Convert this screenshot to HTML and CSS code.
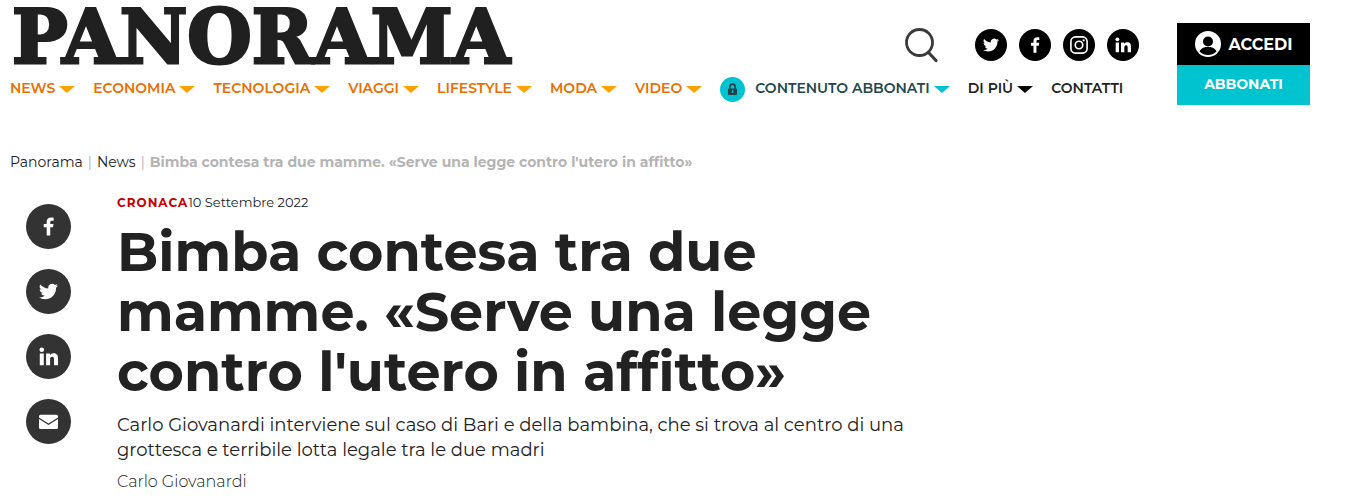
FILE: index.html
```html
<!DOCTYPE html>
<html lang="it">
<head>
    <meta charset="UTF-8">
    <meta name="viewport" content="width=device-width, initial-scale=1.0">
    <title>Bimba contesa tra due mamme - Panorama</title>
    <link rel="stylesheet" href="styles.css">
</head>
<body>
    <!-- Icons shared by header and share bar -->
    <svg class="sprite" aria-hidden="true">
        <symbol id="facebook" viewBox="0 0 24 24">
            <path d="M14.200 23.500V13h3.500l.6-4.200h-4.100V6.600c0-1.300.5-2 2.100-2h2.200V.8C17.900.6 16.800.5 15.500.5c-3.600 0-5.800 1.900-5.800 5.600v2.700H6V13h3.700v10.500z"/>
        </symbol>
        <symbol id="twitter" viewBox="0 0 24 24">
            <path d="M23.950 4.570a10 10 0 0 1-2.820.770 4.960 4.960 0 0 0 2.160-2.720c-.950.560-2 .970-3.130 1.190a4.920 4.920 0 0 0-8.380 4.480C7.690 8.100 4.070 6.130 1.640 3.160a4.920 4.920 0 0 0 1.520 6.570 4.900 4.900 0 0 1-2.230-.610v.060a4.920 4.920 0 0 0 3.950 4.830 5 5 0 0 1-2.210.080 4.940 4.940 0 0 0 4.600 3.420A9.870 9.870 0 0 1 0 19.540a13.990 13.990 0 0 0 7.550 2.210c9.050 0 14-7.500 14-13.980 0-.210 0-.420-.020-.630a9.940 9.940 0 0 0 2.460-2.550z"/>
        </symbol>
        <symbol id="linkedin" viewBox="0 0 24 24">
            <circle cx="3.500" cy="3.500" r="2.900"/>
            <path d="M1 8.300h5V23H1zM9 8.300h4.800v2c.8-1.400 2.300-2.400 4.600-2.400 4.600 0 5.600 2.900 5.600 7V23h-5v-7c0-1.800-.2-3.700-2.400-3.700S14 14 14 16v7H9z"/>
        </symbol>
        <symbol id="instagram" viewBox="0 0 24 24">
            <rect x="1.200" y="1.200" width="21.600" height="21.600" rx="6" fill="none" stroke="currentColor" stroke-width="2.200"/>
            <circle cx="12" cy="12" r="5" fill="none" stroke="currentColor" stroke-width="2.200"/>
            <circle cx="18.200" cy="5.800" r="1.500"/>
        </symbol>
        <symbol id="mail" viewBox="0 0 24 24">
            <path d="M2 3.500h20a2 2 0 0 1 2 2v1.300L12 14.500 0 6.800V5.500a2 2 0 0 1 2-2z"/>
            <path d="M0 8.800l12 7.700 12-7.700v10.700a2 2 0 0 1-2 2H2a2 2 0 0 1-2-2z"/>
        </symbol>
    </svg>

    <header class="header">
        <div class="header-main">
            <div class="topbar">
                <a class="logo" href="#">PANORAMA</a>
                <div class="tools">
                    <button class="search" type="button" aria-label="Cerca">
                        <svg viewBox="0 0 34 36" width="34" height="36" fill="none" stroke="#3a3a3a" stroke-width="2.800">
                            <circle cx="14.500" cy="15.500" r="13"/>
                            <path d="M23.500 25.500l7.500 8" stroke-width="3.200" stroke-linecap="round"/>
                        </svg>
                    </button>
                    <div class="social">
                        <a href="#" aria-label="Twitter"><svg><use href="#twitter"/></svg></a>
                        <a href="#" aria-label="Facebook"><svg><use href="#facebook"/></svg></a>
                        <a href="#" aria-label="Instagram"><svg class="wide"><use href="#instagram"/></svg></a>
                        <a href="#" aria-label="LinkedIn"><svg><use href="#linkedin"/></svg></a>
                    </div>
                </div>
            </div>
            <nav class="menu">
                <a class="has-sub" href="#">NEWS</a>
                <a class="has-sub" href="#">ECONOMIA</a>
                <a class="has-sub" href="#">TECNOLOGIA</a>
                <a class="has-sub" href="#">VIAGGI</a>
                <a class="has-sub" href="#">LIFESTYLE</a>
                <a class="has-sub" href="#">MODA</a>
                <a class="has-sub" href="#">VIDEO</a>
                <a class="has-sub premium" href="#">
                    <svg class="lock" viewBox="0 0 25 25">
                        <circle cx="12.500" cy="12.500" r="12.500" fill="#00c3d0"/>
                        <path d="M9.800 12V9.800a2.700 2.700 0 0 1 5.400 0V12" fill="none" stroke="#263f4b" stroke-width="1.600"/>
                        <rect x="8" y="11.500" width="9" height="6.500" rx="1" fill="#263f4b"/>
                        <path d="M12.500 13v3" stroke="#00c3d0" stroke-width="1.200"/>
                    </svg>
                    CONTENUTO ABBONATI
                </a>
                <a class="has-sub dark" href="#">DI PIÙ</a>
                <a class="dark" href="#">CONTATTI</a>
            </nav>
        </div>
        <div class="account">
            <a class="login" href="#">
                <svg viewBox="0 0 26 26" width="26" height="26">
                    <circle cx="13" cy="13" r="13" fill="#fff"/>
                    <circle cx="13" cy="10.500" r="5" fill="#000"/>
                    <path d="M4.500 20.500c1.500-3 4-4 6-4.500h5c2 .5 4.500 1.500 6 4.500a12 12 0 0 1-17 0z" fill="#000"/>
                </svg>
                ACCEDI
            </a>
            <a class="subscribe" href="#">ABBONATI</a>
        </div>
    </header>

    <nav class="breadcrumb">
        <a href="#">Panorama</a><span>|</span><a href="#">News</a><span>|</span><strong>Bimba contesa tra due mamme. «Serve una legge contro l'utero in affitto»</strong>
    </nav>

    <main class="article">
        <div class="share">
            <a href="#" aria-label="Condividi su Facebook"><svg><use href="#facebook"/></svg></a>
            <a href="#" aria-label="Condividi su Twitter"><svg><use href="#twitter"/></svg></a>
            <a href="#" aria-label="Condividi su LinkedIn"><svg><use href="#linkedin"/></svg></a>
            <a href="#" aria-label="Invia per email"><svg><use href="#mail"/></svg></a>
        </div>
        <article class="post">
            <div class="meta"><a href="#">CRONACA</a><time datetime="2022-09-10">10 Settembre 2022</time></div>
            <h1>Bimba contesa tra due mamme. «Serve una legge contro l'utero in affitto»</h1>
            <p class="summary">Carlo Giovanardi interviene sul caso di Bari e della bambina, che si trova al centro di una grottesca e terribile lotta legale tra le due madri</p>
            <a class="author" href="#">Carlo Giovanardi</a>
        </article>
    </main>
</body>
</html>
```
FILE: styles.css
```css
* {
    box-sizing: border-box;
}
body {
    margin: 0;
    background: #fff;
    color: #222;
    font-family: Montserrat, Inter, sans-serif;
}
a {
    color: inherit;
    text-decoration: none;
}
.sprite {
    display: none;
}

/* Header */
.header {
    display: flex;
    gap: 38px;
    padding: 0 38px 0 10px;
}
.header-main {
    flex: 1;
    min-width: 0;
}
.topbar {
    display: flex;
    justify-content: space-between;
    height: 77px;
}
.logo {
    padding-left: 2px;
    color: #202020;
    font-family: "DejaVu Serif", serif;
    font-size: 74px;
    font-weight: bold;
    line-height: 74px;
    -webkit-text-stroke: 3px #202020;
}
.tools {
    display: flex;
    align-items: center;
    gap: 36px;
    padding-top: 13px;
}
.search {
    display: flex;
    padding: 0;
    border: 0;
    background: none;
    cursor: pointer;
}
.social {
    display: flex;
    gap: 12px;
}
.social a {
    display: flex;
    align-items: center;
    justify-content: center;
    width: 32px;
    height: 32px;
    border-radius: 50%;
    background: #000;
    color: #fff;
}
.social svg {
    width: 16px;
    height: 16px;
    fill: currentColor;
}
.social .wide {
    width: 18px;
    height: 18px;
}
.menu {
    display: flex;
    align-items: center;
    gap: 18px;
    height: 22px;
    color: #eb6e00;
    font-size: 14px;
    font-weight: 600;
    line-height: 22px;
    white-space: nowrap;
}
.menu a {
    display: flex;
    align-items: center;
}
.has-sub::after {
    content: "";
    margin: 3px 0 0 4px;
    border: solid transparent;
    border-width: 7px 8px 0;
    border-top-color: #ffa100;
}
.menu .premium {
    color: #23474d;
}
.premium::after {
    border-top-color: #00c3d0;
}
.menu .dark {
    color: #222;
}
.dark::after {
    border-top-color: #000;
}
.lock {
    width: 25px;
    height: 25px;
    margin: 3px 10px 0 0;
}
.account {
    flex: 0 0 133px;
    padding-top: 23px;
    color: #fff;
    font-size: 16px;
    font-weight: 700;
}
.login,
.subscribe {
    display: flex;
    align-items: center;
    justify-content: center;
}
.login {
    gap: 8px;
    height: 42px;
    background: #000;
}
.subscribe {
    height: 40px;
    padding-bottom: 2px;
    background: #00c3d0;
    font-size: 14px;
}

/* Breadcrumb */
.breadcrumb {
    padding: 47px 10px 0;
    font-size: 14px;
    line-height: 20px;
}
.breadcrumb span {
    padding: 0 5px;
    color: #b4b4b4;
}
.breadcrumb strong {
    color: #b4b4b4;
}

/* Article */
.article {
    display: flex;
    gap: 46px;
    padding: 20px 26px 0;
}
.share {
    display: flex;
    flex-direction: column;
    gap: 20px;
    padding-top: 12px;
}
.share a {
    display: flex;
    align-items: center;
    justify-content: center;
    width: 45px;
    height: 45px;
    border-radius: 50%;
    background: #333;
    color: #fff;
}
.share svg {
    width: 19px;
    height: 19px;
    fill: currentColor;
}
.post {
    max-width: 790px;
}
.meta {
    font-size: 13px;
    line-height: 20px;
}
.meta a {
    color: #c80000;
    font-size: 12px;
    font-weight: 700;
    letter-spacing: 1px;
}
h1 {
    margin: 9px 0 11px;
    font-size: 54px;
    font-weight: 700;
    line-height: 60px;
}
.summary {
    margin: 0 0 9px;
    font-size: 18px;
    line-height: 25px;
}
.author {
    display: block;
    font-size: 16px;
    font-weight: 300;
    line-height: 20px;
}
```
